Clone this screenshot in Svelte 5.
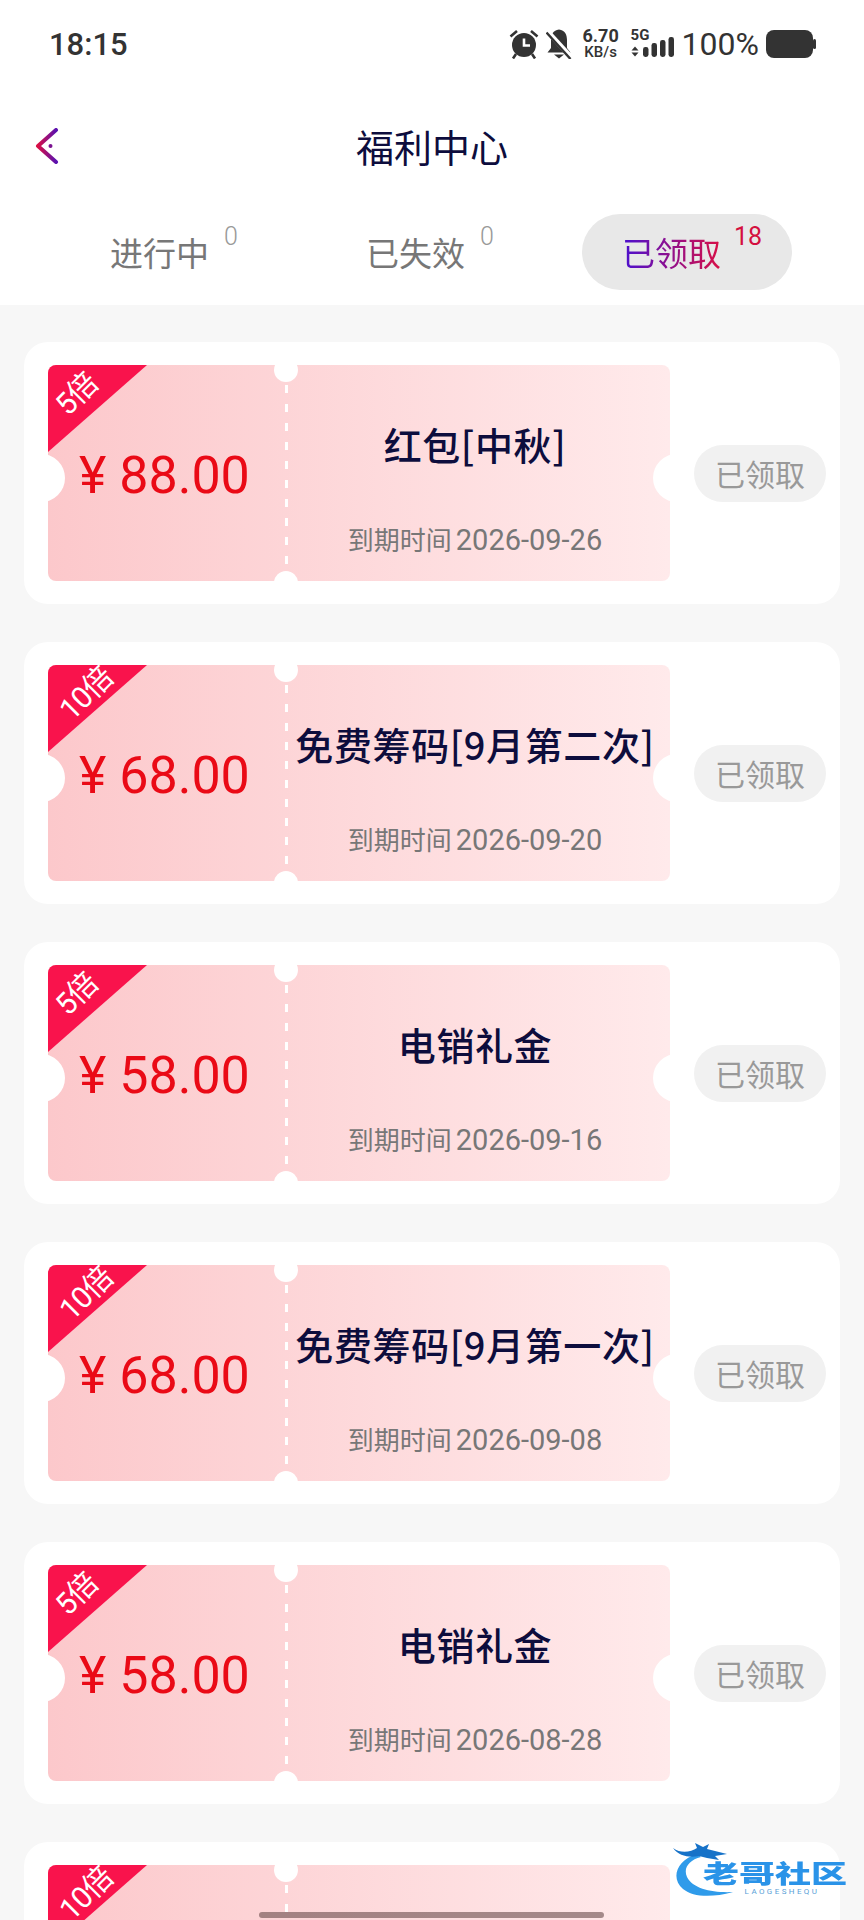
<script>
  const tabs = [
    { label: '进行中', count: 0 },
    { label: '已失效', count: 0 },
    { label: '已领取', count: 18, active: true }
  ];
  // the last card runs off the bottom of the screen, only its corner label shows
  const coupons = [
    { times: '5倍', amount: '88.00', name: '红包[中秋]', date: '2026-09-26' },
    { times: '10倍', amount: '68.00', name: '免费筹码[9月第二次]', date: '2026-09-20' },
    { times: '5倍', amount: '58.00', name: '电销礼金', date: '2026-09-16' },
    { times: '10倍', amount: '68.00', name: '免费筹码[9月第一次]', date: '2026-09-08' },
    { times: '5倍', amount: '58.00', name: '电销礼金', date: '2026-08-28' },
    { times: '10倍' }
  ];
</script>

<div class="page">
  <header class="status">
    <span class="time">18:15</span>
    <div class="sys">
      <svg class="alarm" viewBox="0 0 30 30" width="30" height="30">
        <circle cx="15" cy="16" r="12" fill="#333" />
        <path d="M15 9.500V16.500H21" fill="none" stroke="#fff" stroke-width="2.600" />
        <path d="M1.500 7.500L8 2M28.500 7.500L22 2M7 25L4 29.500M23 25L26 29.500" stroke="#333" stroke-width="2.600" fill="none" />
      </svg>
      <svg class="bell" viewBox="0 0 26 30" width="26" height="30">
        <path d="M13 0.500C7 1 5 6 5 11V19L1.500 23.500H24.500L21 19V11C21 6 19 1 13 0.500Z" fill="#333" />
        <path d="M8 25.500H18L13 29.500Z" fill="#333" />
        <path d="M1 2L25 28" stroke="#fff" stroke-width="5" />
        <path d="M0.500 3.500L24.500 30" stroke="#333" stroke-width="2.400" />
      </svg>
      <div class="speed"><span>6.70</span><span class="unit">KB/s</span></div>
      <div class="net">
        <span class="five">5G</span>
        <svg viewBox="0 0 44 30" width="44" height="30">
          <path d="M4 9.500L7.500 13.500H0.500ZM4 19.500L7.500 15.500H0.500Z" fill="#333" />
          <rect x="12" y="10" width="5.500" height="10" rx="2.400" fill="#333" />
          <rect x="20.500" y="6" width="5.500" height="14" rx="2.400" fill="#333" />
          <rect x="29" y="3" width="5.500" height="17" rx="2.400" fill="#333" />
          <rect x="37.500" y="0" width="5.500" height="20" rx="2.400" fill="#333" />
        </svg>
      </div>
      <span class="pct">100%</span>
      <svg class="batt" viewBox="0 0 50 28" width="50" height="28">
        <rect x="0" y="0" width="47" height="28" rx="8" fill="#333" />
        <rect x="47" y="9" width="3" height="10" rx="1.500" fill="#333" />
      </svg>
    </div>
  </header>

  <nav class="bar">
    <svg class="back" viewBox="0 0 24 36" width="24" height="36">
      <defs>
        <linearGradient id="chev" x1="0" y1="0.5" x2="1" y2="0.5">
          <stop offset="0" stop-color="#d90f45" />
          <stop offset="1" stop-color="#5a12b0" />
        </linearGradient>
      </defs>
      <path d="M21 2L3 18L21 34" fill="none" stroke="url(#chev)" stroke-width="4" stroke-linecap="round" stroke-linejoin="round" />
      <circle cx="15.500" cy="18" r="2" fill="#7a1290" />
    </svg>
    <h1>福利中心</h1>
  </nav>

  <div class="tabs">
    {#each tabs as t}
      <div class="tab" class:active={t.active}>
        <span class="label">{t.label}</span>
        <span class="num">{t.count}</span>
      </div>
    {/each}
  </div>

  <main class="list">
    {#each coupons as c}
      <section class="card">
        <div class="ticket-wrap">
          <div class="ticket">
            <span class="corner"></span>
            <span class="hole left"></span>
            <span class="hole right"></span>
            <span class="hole top"></span>
            <span class="hole bottom"></span>
            <div class="price">{#if c.amount}¥ {c.amount}{/if}</div>
            <div class="info">
              {#if c.name}
                <div class="name">{c.name}</div>
                <div class="date"><span>到期时间</span><span class="day">{c.date}</span></div>
              {/if}
            </div>
          </div>
          <span class="times" class:long={c.times.length > 2}>{c.times}</span>
        </div>
        {#if c.name}
          <button class="got">已领取</button>
        {/if}
      </section>
    {/each}
  </main>

  <div class="mark">
    <svg viewBox="0 0 178 56" width="178" height="56">
      <path d="M26 12C6 18 -1 36 12 47C22 55 40 56 62 50C42 51 22 47 16 35C12 26 18 18 30 15Z" fill="#2f9bea" />
      <path d="M2 6C10 12 20 10 26 6L24 1L32 5L38 2L36 7L56 12L44 14L48 18L36 16L28 14C18 16 8 14 2 6Z" fill="#1672c8" />
    </svg>
    <div class="mark-text">
      <strong>老哥社区</strong>
      <span>LAOGESHEQU</span>
    </div>
  </div>
  <div class="handle"></div>
</div>

<style>
  :global(body) {
    margin: 0;
    background: #fff;
  }
  .page {
    position: relative;
    width: 864px;
    height: 1920px;
    overflow: hidden;
    background: #fff;
    font-family: Roboto, "Noto Sans CJK SC", sans-serif;
  }
  .status {
    display: flex;
    justify-content: space-between;
    align-items: center;
    height: 88px;
    padding: 0 48px 0 49px;
    color: #333;
  }
  .time {
    font-size: 31px;
    font-weight: 500;
  }
  .sys {
    display: flex;
    align-items: center;
  }
  .alarm {
    margin-right: 7px;
  }
  .bell {
    margin-right: 10px;
  }
  .speed {
    display: flex;
    flex-direction: column;
    align-items: center;
    width: 38px;
    margin-right: 11px;
    font-size: 18px;
    font-weight: 700;
    line-height: 17px;
  }
  .speed .unit {
    font-size: 15px;
    font-weight: 500;
  }
  .net {
    position: relative;
    width: 44px;
    height: 30px;
    margin-right: 7px;
  }
  .net svg {
    display: block;
    margin-top: 8px;
  }
  .five {
    position: absolute;
    left: 0;
    top: -2px;
    font-size: 15px;
    font-weight: 700;
    line-height: 16px;
  }
  .pct {
    font-size: 32px;
    margin-right: 7px;
  }
  .batt {
    display: block;
  }
  .bar {
    display: flex;
    align-items: center;
    justify-content: center;
    position: relative;
    box-sizing: border-box;
    height: 126px;
    padding-bottom: 12px;
  }
  .back {
    position: absolute;
    left: 35px;
    top: 40px;
  }
  h1 {
    margin: 0;
    font-size: 38px;
    font-weight: 400;
    color: #0d0d3d;
    font-family: "Noto Sans CJK SC", sans-serif;
  }
  .tabs {
    display: flex;
    gap: 46px;
    height: 76px;
    padding: 0 0 15px 70px;
  }
  .tab {
    display: flex;
    align-items: center;
    gap: 15px;
    box-sizing: border-box;
    width: 210px;
    padding-left: 40px;
    border-radius: 38px;
    color: #777;
    font-size: 33px;
    font-family: "Noto Sans CJK SC", sans-serif;
  }
  .tab.active {
    background: #e8e8e8;
  }
  .tab.active .label {
    background: linear-gradient(90deg, #4a10d0, #d90f45);
    -webkit-background-clip: text;
    background-clip: text;
    color: transparent;
  }
  .num {
    margin-bottom: 30px;
    font-family: Roboto, sans-serif;
    font-size: 25px;
    font-weight: 300;
    line-height: 24px;
    color: #999;
  }
  .tab.active .num {
    margin-left: -2px;
    color: #d4103f;
    font-weight: 400;
  }
  .list {
    display: flex;
    flex-direction: column;
    gap: 38px;
    height: 1615px;
    box-sizing: border-box;
    padding: 37px 24px 0;
    background: #f7f7f7;
  }
  .card {
    display: flex;
    flex: none;
    align-items: center;
    gap: 24px;
    height: 262px;
    padding: 0 14px 0 24px;
    background: #fff;
    border-radius: 24px;
  }
  .ticket-wrap {
    position: relative;
    flex: none;
  }
  .ticket {
    position: relative;
    display: flex;
    width: 622px;
    height: 216px;
    overflow: hidden;
    border-radius: 8px;
    background: linear-gradient(90deg, #fcc8cb, #ffeaeb);
  }
  .corner {
    position: absolute;
    left: 0;
    top: 0;
    width: 99px;
    height: 87px;
    background: #f9134c;
    clip-path: polygon(0 0, 100% 0, 0 100%);
  }
  .times {
    position: absolute;
    left: 13px;
    top: 28px;
    line-height: 34px;
    color: #fff;
    font-size: 30px;
    letter-spacing: -1px;
    white-space: nowrap;
    font-family: Roboto, "Noto Sans CJK SC", sans-serif;
    transform-origin: 0 50%;
    transform: rotate(-45deg);
  }
  .times.long {
    left: 17px;
    top: 33px;
  }
  .hole {
    position: absolute;
    background: #fff;
    border-radius: 50%;
  }
  .hole.left,
  .hole.right {
    width: 48px;
    height: 48px;
    top: 89px;
  }
  .hole.left {
    left: -31px;
  }
  .hole.right {
    right: -31px;
  }
  .hole.top,
  .hole.bottom {
    width: 24px;
    height: 24px;
    left: 226px;
  }
  .hole.top {
    top: -7px;
  }
  .hole.bottom {
    bottom: -14px;
  }
  .price {
    display: flex;
    flex: none;
    align-items: center;
    box-sizing: border-box;
    width: 237px;
    padding: 4px 0 0 31px;
    font-size: 52px;
    color: #ea0a16;
    white-space: pre;
  }
  .info {
    display: flex;
    flex: 1;
    flex-direction: column;
    align-items: center;
    padding: 50px 5px 0 0;
    background-image: repeating-linear-gradient(180deg, #fff 0 8px, transparent 8px 19px);
    background-size: 3px 182px;
    background-position: 0 20px;
    background-repeat: no-repeat;
  }
  .name {
    font-size: 38px;
    font-weight: 500;
    line-height: 58px;
    letter-spacing: 0.6px;
    color: #0d0d3d;
    white-space: nowrap;
    font-family: "Noto Sans CJK SC", sans-serif;
  }
  .date {
    display: flex;
    align-items: baseline;
    gap: 4px;
    margin-top: 48px;
    font-size: 26px;
    line-height: 36px;
    color: #777;
    font-family: "Noto Sans CJK SC", sans-serif;
  }
  .day {
    font-family: Roboto, sans-serif;
    font-size: 29px;
  }
  .got {
    flex: none;
    width: 132px;
    height: 57px;
    padding: 0;
    border: 0;
    border-radius: 29px;
    background: #f1f1f1;
    color: #999;
    font-size: 30px;
    font-family: "Noto Sans CJK SC", sans-serif;
  }
  .mark {
    position: absolute;
    left: 671px;
    top: 1842px;
    width: 178px;
    height: 56px;
  }
  .mark svg {
    display: block;
  }
  .mark-text {
    position: absolute;
    left: 31px;
    top: 12px;
    display: flex;
    flex-direction: column;
    align-items: center;
    width: 146px;
    color: #2a93e8;
  }
  .mark-text strong {
    font-size: 36px;
    line-height: 36px;
    font-weight: 900;
    font-family: "Noto Sans CJK SC", sans-serif;
    white-space: nowrap;
    transform: scaleY(0.7);
  }
  .mark-text span {
    margin-top: -3px;
    padding-left: 14px;
    font-size: 8px;
    line-height: 10px;
    letter-spacing: 2.400px;
    color: #5a9fd8;
  }
  .handle {
    position: absolute;
    left: 259px;
    bottom: 2px;
    width: 345px;
    height: 6px;
    border-radius: 3px;
    background: rgba(90, 60, 60, 0.55);
  }
</style>
